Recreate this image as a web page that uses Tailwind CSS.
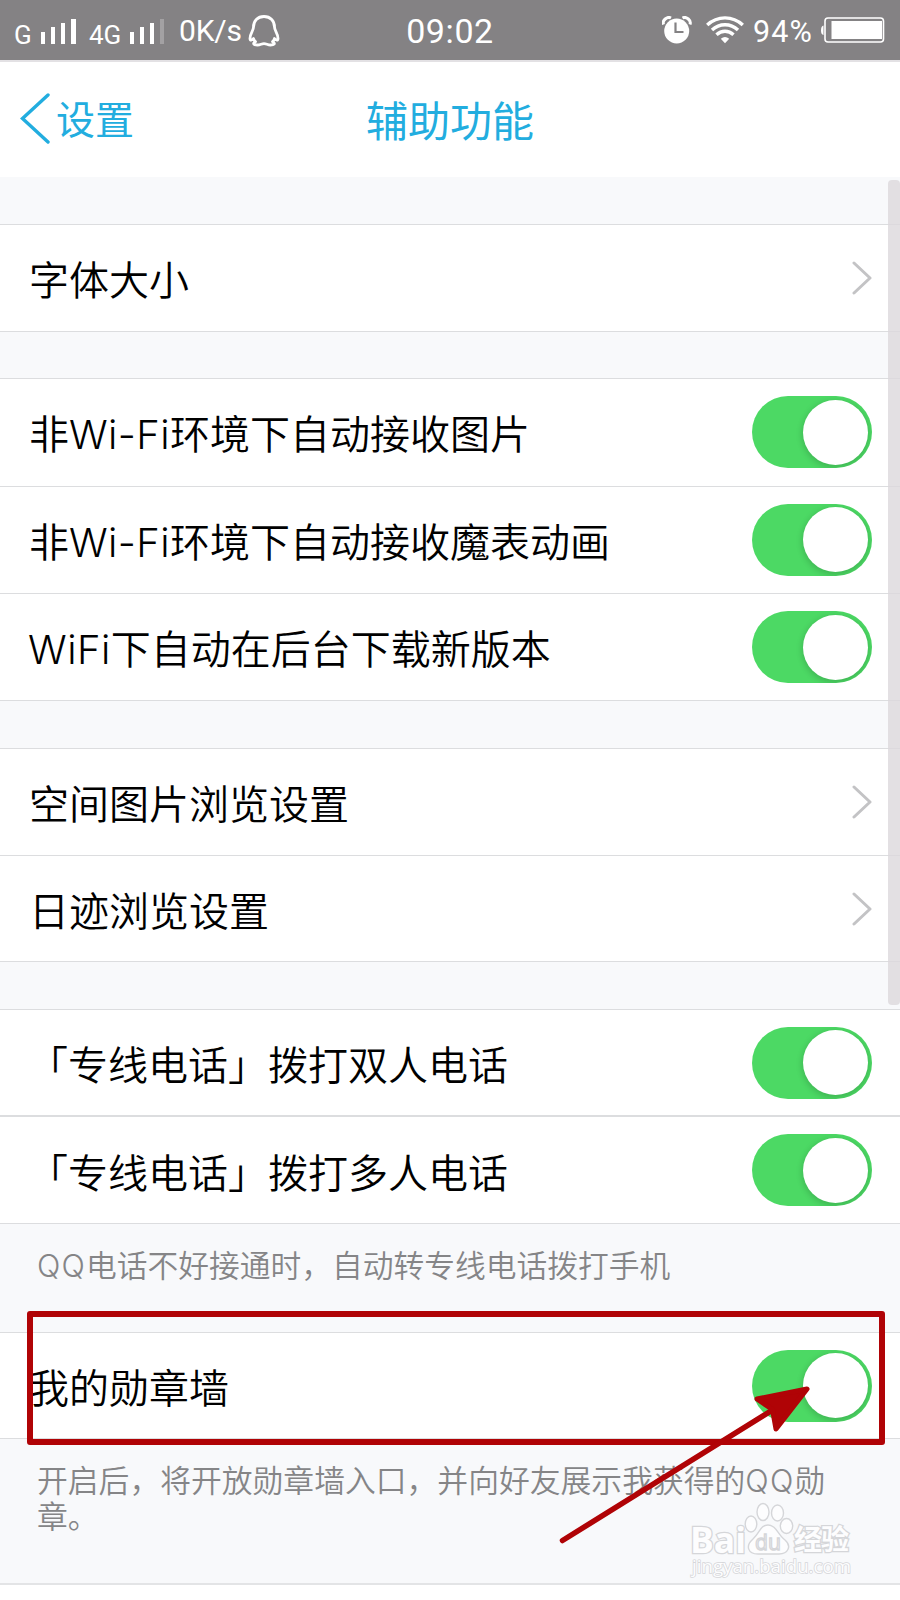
<!DOCTYPE html>
<html lang="zh-CN">
<head>
    <meta charset="UTF-8">
    <meta name="viewport" content="width=device-width, initial-scale=1.0">
    <title>辅助功能</title>
    <script src="https://cdn.jsdelivr.net/npm/@tailwindcss/browser@4"></script>
</head>
<body class="relative h-[1600px] w-[900px] overflow-hidden bg-[#f8f9fb] font-[Inter,'Noto_Sans_CJK_SC',sans-serif] text-black">
    <!-- shared icons -->
    <svg class="hidden">
        <symbol id="chevron" viewBox="0 0 20 34">
            <path d="M2 2L18 17L2 32" fill="none" stroke="#c3c3c5" stroke-width="3" stroke-linecap="round" stroke-linejoin="round"/>
        </symbol>
    </svg>

    <!-- status bar -->
    <div class="flex h-[60px] items-start justify-between bg-[#848284] font-[Roboto,sans-serif] leading-none text-white">
        <div class="flex w-[300px] pl-[14px]">
            <span class="mt-[22px] w-[27px] text-[26px]">G</span>
            <svg class="mt-[19px] h-[25px] w-[36px]" viewBox="0 0 36 25" fill="#fff">
                <rect y="13" width="4" height="12"/><rect x="10" y="8" width="4" height="17"/><rect x="20" y="4" width="4" height="21"/><rect x="30" width="5" height="25"/>
            </svg>
            <span class="mt-[22px] ml-[12px] w-[41px] text-[26px]">4G</span>
            <svg class="mt-[19px] h-[25px] w-[36px]" viewBox="0 0 36 25" fill="#fff">
                <rect y="13" width="4" height="12"/><rect x="10" y="8" width="4" height="17"/><rect x="20" y="4" width="4" height="21"/><rect x="30" width="4" height="25" fill="#a3a1a3"/>
            </svg>
            <span class="mt-[16px] ml-[13px] w-[69px] text-[30px] tracking-[-0.2px]">0K/s</span>
            <svg class="mt-[14px] h-[33px] w-[32px] shrink-0" viewBox="0 0 32 33" fill="none" stroke="#fff" stroke-width="2.8" stroke-linejoin="round">
                <path d="M16 2.500C9.500 2.500 5.500 7 5.500 13C5.500 17 2 19 2 24.500C2 27 4 26.500 5.500 24.500C5.800 26 6.500 27 7.500 27.700C4 29.500 6 31 9.500 31C12.500 31 13.500 29.600 16 29.600C18.500 29.600 19.500 31 22.500 31C26 31 28 29.500 24.500 27.700C25.500 27 26.200 26 26.500 24.500C28 26.500 30 27 30 24.500C30 19 26.500 17 26.500 13C26.500 7 22.500 2.500 16 2.500Z"/>
            </svg>
        </div>
        <div class="mt-[14px] w-[100px] text-center text-[34px] tracking-[0.6px]">09:02</div>
        <div class="flex w-[300px] pl-[62px]">
            <svg class="mt-[16px] h-[28px] w-[30px] shrink-0" viewBox="0 0 30 28">
                <circle cx="14.700" cy="15" r="12.500" fill="#fff"/>
                <path d="M1.500 8.500C0 4.500 5 0 9 2M20.500 2C24.500 0 29.500 4.500 28 8.500" fill="none" stroke="#fff" stroke-width="3"/>
                <path d="M13.500 6.500V16H21.500" fill="none" stroke="#848284" stroke-width="2.200"/>
            </svg>
            <svg class="mt-[16px] ml-[14px] h-[28px] w-[38px] shrink-0" viewBox="0 0 38 28" fill="none" stroke="#fff" stroke-width="3.400">
                <path d="M1.200 9C11.500 -0.500 26.500 -0.500 36.800 9M6 14C13.500 7 24.500 7 32 14M10.500 18.700C15.500 14 22.500 14 27.500 18.700"/>
                <path d="M14.800 22.800Q19 19 23.200 22.800L19 27.200Z" fill="#fff" stroke="none"/>
            </svg>
            <span class="mt-[17px] ml-[9px] w-[67px] text-[30.500px] tracking-[1.100px]">94%</span>
            <svg class="mt-[17px] h-[26px] w-[65px] shrink-0" viewBox="0 0 65 26">
                <rect x="5" y="1" width="58.500" height="24" rx="3" fill="none" stroke="#fff" stroke-width="1.600"/>
                <rect x="11.500" y="4" width="50.500" height="18" fill="#fff"/>
                <path d="M3.500 8.500Q1 9 1 13.500Q1 17.500 3.500 18Z" fill="#fff"/>
            </svg>
        </div>
    </div>

    <!-- title bar -->
    <div class="flex h-[117px] items-center border-t-2 border-[#e3e1e4] bg-white text-[#22addf]">
        <div class="flex w-[300px] items-center pb-[3px] pl-[20px]">
            <svg class="h-[52px] w-[30px]" viewBox="0 0 30 52" fill="none" stroke="currentColor" stroke-width="3.400" stroke-linecap="round">
                <path d="M28 3L2.500 26.500L28 50"/>
            </svg>
            <span class="ml-[6px] pt-[4px] text-[39px] leading-[50px]">设置</span>
        </div>
        <h1 class="w-[300px] pt-[5px] text-center text-[42px] leading-[50px]">辅助功能</h1>
    </div>

    <!-- settings list -->
    <main class="pt-[47px] text-[40px] leading-[50px] font-[350]">
        <section class="mb-[46px] border-t border-[#dcdddf] bg-white">
            <div class="flex h-[107px] items-center justify-between border-b border-[#dcdddf] pr-[28px] pl-[29px]">
                <span class="pt-[6px]">字体大小</span>
                <svg class="h-[34px] w-[20px]"><use href="#chevron"/></svg>
            </div>
        </section>

        <section class="mb-[47px] border-t border-[#dcdddf] bg-white">
            <div class="flex h-[108px] items-center justify-between border-b border-[#dcdddf] pr-[28px] pb-[1px] pl-[29px]">
                <span class="pt-[6px]">非<span class="tracking-[0.4px]">Wi-Fi</span>环境下自动接收图片</span>
                <span class="flex h-[72px] w-[120px] justify-end overflow-hidden rounded-full bg-[#4cd964] py-[3.500px] pr-[4.500px]"><i class="size-[65px] rounded-full bg-white shadow-[0_2px_6px_1px_rgba(0,0,0,0.16)]"></i></span>
            </div>
            <div class="flex h-[107px] items-center justify-between border-b border-[#dcdddf] pr-[28px] pb-[1px] pl-[29px]">
                <span class="pt-[6px]">非<span class="tracking-[0.4px]">Wi-Fi</span>环境下自动接收魔表动画</span>
                <span class="flex h-[72px] w-[120px] justify-end overflow-hidden rounded-full bg-[#4cd964] py-[3.500px] pr-[4.500px]"><i class="size-[65px] rounded-full bg-white shadow-[0_2px_6px_1px_rgba(0,0,0,0.16)]"></i></span>
            </div>
            <div class="flex h-[107px] items-center justify-between border-b border-[#dcdddf] pr-[28px] pl-[28px]">
                <span class="pt-[6px]"><span class="tracking-[0.5px]">WiFi</span>下自动在后台下载新版本</span>
                <span class="flex h-[72px] w-[120px] justify-end overflow-hidden rounded-full bg-[#4cd964] py-[3.500px] pr-[4.500px]"><i class="size-[65px] rounded-full bg-white shadow-[0_2px_6px_1px_rgba(0,0,0,0.16)]"></i></span>
            </div>
        </section>

        <section class="mb-[47px] border-t border-[#dcdddf] bg-white">
            <div class="flex h-[107px] items-center justify-between border-b border-[#dcdddf] pr-[28px] pl-[29px]">
                <span class="pt-[6px]">空间图片浏览设置</span>
                <svg class="h-[34px] w-[20px]"><use href="#chevron"/></svg>
            </div>
            <div class="flex h-[106px] items-center justify-between border-b border-[#dcdddf] pr-[28px] pl-[29px]">
                <span class="pt-[6px]">日迹浏览设置</span>
                <svg class="h-[34px] w-[20px]"><use href="#chevron"/></svg>
            </div>
        </section>

        <section class="border-t border-[#dcdddf] bg-white">
            <div class="flex h-[107px] items-center justify-between border-b-2 border-[#dcdddf] pr-[28px] pl-[28px]">
                <span class="pt-[7px]">「专线电话」拨打双人电话</span>
                <span class="flex h-[72px] w-[120px] justify-end overflow-hidden rounded-full bg-[#4cd964] py-[3.500px] pr-[4.500px]"><i class="size-[65px] rounded-full bg-white shadow-[0_2px_6px_1px_rgba(0,0,0,0.16)]"></i></span>
            </div>
            <div class="flex h-[107px] items-center justify-between border-b border-[#dcdddf] pr-[28px] pl-[28px]">
                <span class="pt-[7px]">「专线电话」拨打多人电话</span>
                <span class="flex h-[72px] w-[120px] justify-end overflow-hidden rounded-full bg-[#4cd964] py-[3.500px] pr-[4.500px]"><i class="size-[65px] rounded-full bg-white shadow-[0_2px_6px_1px_rgba(0,0,0,0.16)]"></i></span>
            </div>
        </section>
        <p class="h-[108px] pt-[24px] pl-[37px] text-[30.750px] leading-[36px] text-[#858587]"><span class="tracking-[1.200px]">QQ</span>电话不好接通时，自动转专线电话拨打手机</p>

        <section class="border-t border-[#dcdddf] bg-white">
            <div class="flex h-[106px] items-center justify-between border-b border-[#dcdddf] pr-[28px] pl-[29px]">
                <span class="pt-[6px]">我的勋章墙</span>
                <span class="flex h-[72px] w-[120px] justify-end overflow-hidden rounded-full bg-[#4cd964] py-[3.500px] pr-[4.500px]"><i class="size-[65px] rounded-full bg-white shadow-[0_2px_6px_1px_rgba(0,0,0,0.16)]"></i></span>
            </div>
        </section>
        <p class="h-[144px] pt-[24px] pl-[37px] text-[30.800px] leading-[36px] text-[#858587]">开启后，将开放勋章墙入口，并向好友展示我获得的<span class="tracking-[1.200px]">QQ</span>勋<br>章。</p>

        <section class="h-[17px] border-t-2 border-[#e3e4e6] bg-white"></section>
    </main>

    <!-- scrollbar -->
    <div class="absolute top-[180px] right-0 h-[825px] w-[12px] rounded-[4px] bg-[#dcd8dc]/80"></div>

    <!-- highlight box and arrow -->
    <div class="absolute top-[1311px] left-[27px] h-[134px] w-[858px] rounded-[3px] border-[6px] border-[#b00306]"></div>
    <svg class="absolute top-[1380px] left-[555px] h-[170px] w-[260px]" viewBox="555 1380 260 170" fill="#b00306" stroke="#b00306" stroke-linecap="round" stroke-linejoin="round">
        <path d="M562.500 1540.500L775 1408.500" stroke-width="5.500"/>
        <path d="M807 1389L757 1399L772.500 1409.500L776 1429Z" stroke-width="5"/>
    </svg>

    <!-- watermark -->
    <svg class="absolute top-[1495px] left-[680px] h-[90px] w-[190px]" viewBox="680 1495 190 90" fill="#fdfdfe" stroke="#d5d6d9" stroke-width="1.400">
        <g font-family="'Open Sans', sans-serif" font-weight="700" paint-order="stroke">
            <text x="690" y="1552.500" font-size="36" textLength="56" lengthAdjust="spacingAndGlyphs" stroke-width="2.600">Bai</text>
            <text x="794" y="1550" font-family="'Noto Sans CJK SC', sans-serif" font-size="28" textLength="55" stroke-width="2.600">经验</text>
        </g>
        <ellipse cx="751" cy="1524" rx="5.800" ry="8"/>
        <ellipse cx="763" cy="1512" rx="6" ry="8.500"/>
        <ellipse cx="777.500" cy="1513" rx="6" ry="8"/>
        <ellipse cx="786.500" cy="1526" rx="6.200" ry="7.500"/>
        <path d="M768 1525C776 1525 778 1535 785 1540C792 1546 788 1554 779 1554H758C748 1554 745 1546 753 1539C760 1533 760 1525 768 1525Z"/>
        <text x="755" y="1549.500" font-family="'Open Sans', sans-serif" font-size="22" textLength="26" lengthAdjust="spacingAndGlyphs">du</text>
        <text x="692" y="1573" font-family="'Open Sans', sans-serif" font-size="19" textLength="159" lengthAdjust="spacingAndGlyphs" paint-order="stroke" stroke-width="1.600">jingyan.baidu.com</text>
    </svg>
</body>
</html>
